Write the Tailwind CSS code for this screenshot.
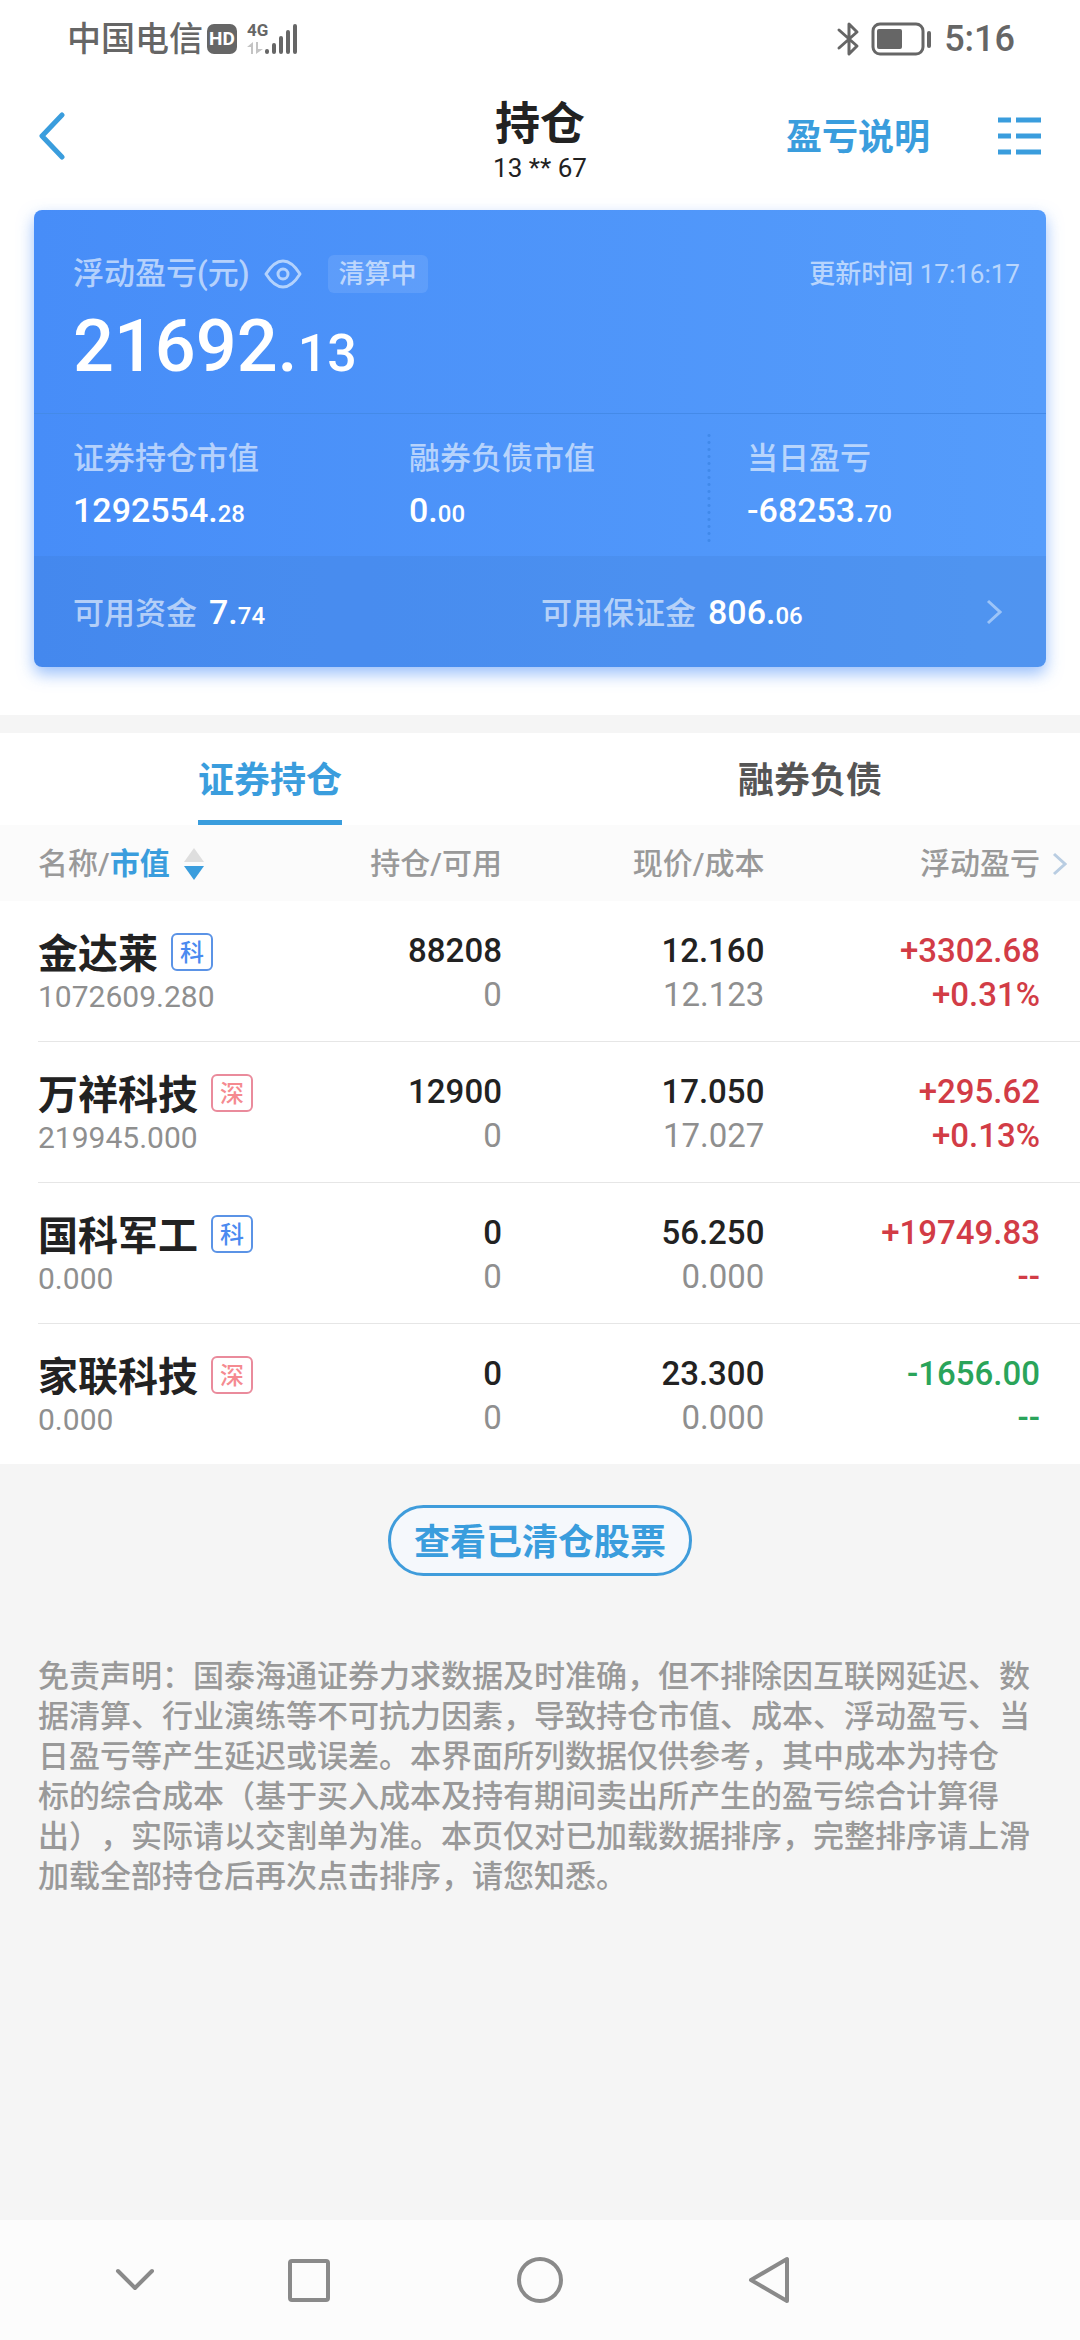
<!DOCTYPE html>
<html lang="zh-CN">

<head>
    <meta charset="UTF-8">
    <meta name="viewport" content="width=device-width, initial-scale=1.0">
    <title>持仓</title>
    <!-- Tailwind CSS CDN -->
    <script src="https://cdn.jsdelivr.net/npm/@tailwindcss/browser@4"></script>
</head>

<body class="min-h-screen flex flex-col bg-[#f5f5f5] text-[#222] font-['Roboto','Noto_Sans_CJK_SC',sans-serif]">

    <!-- Status bar -->
    <div class="bg-white flex items-center justify-between h-[76px] pt-[2px] pl-[67px] pr-[65px] text-[#666]">
        <div class="flex items-center">
            <span class="text-[34px] leading-[40px] font-medium">中国电信</span>
            <span class="ml-[4px] w-[30px] h-[30px] rounded-[7px] bg-[#666] text-white text-[19px] leading-[30px] font-bold text-center">HD</span>
            <svg class="ml-[10px] w-[54px] h-[44px]" viewBox="0 -5 54 44" fill="none">
                <text x="0" y="14" font-size="17" font-weight="700" fill="#666">4G</text>
                <path d="M6 20v12H4v-7H0zM9 20h2v7h5l-7 5z" fill="#c4c4c4" />
                <path d="M20 29v1M27 23v7M34 16v14M41 10v20M48 4v26" stroke="#666" stroke-width="4" stroke-linecap="round" />
            </svg>
        </div>
        <div class="flex items-center">
            <svg class="w-[24px] h-[36px]" viewBox="0 0 24 36" fill="none" stroke="#666" stroke-width="3" stroke-linejoin="round" stroke-linecap="round">
                <path d="M3 9l18 16-8 8V3l8 8L3 27" />
            </svg>
            <svg class="ml-[11px] w-[62px] h-[34px]" viewBox="0 0 62 34">
                <rect x="2" y="2" width="50" height="30" rx="7" fill="none" stroke="#666" stroke-width="3" />
                <rect x="6" y="7" width="25" height="20" rx="2" fill="#666" />
                <path d="M58 11v13" stroke="#666" stroke-width="4" stroke-linecap="round" />
            </svg>
            <span class="ml-[11px] text-[36px] leading-[40px] font-medium">5:16</span>
        </div>
    </div>

    <!-- Title bar -->
    <header class="bg-white grid grid-cols-3 items-center h-[120px] px-[38px]">
        <button type="button" aria-label="返回" class="justify-self-start">
            <svg class="w-[30px] h-[48px]" viewBox="0 0 30 48" fill="none" stroke="#3a9ddd" stroke-width="5" stroke-linecap="round" stroke-linejoin="round">
                <path d="M24 3L4 24l20 21" />
            </svg>
        </button>
        <div class="pt-[7px] text-center">
            <h1 class="text-[45px] leading-[56px] font-bold">持仓</h1>
            <p class="text-[26px] leading-[30px]">13 ** 67</p>
        </div>
        <div class="justify-self-end flex items-center gap-[68px]">
            <a href="#" class="pt-1 text-[36px] leading-[44px] font-bold text-[#3a9ddd] whitespace-nowrap">盈亏说明</a>
            <button type="button" aria-label="菜单">
                <svg class="w-[44px] h-[40px]" viewBox="0 0 44 40" fill="none" stroke="#3a9ddd" stroke-width="5">
                    <path d="M0 4h13M18 4h25M0 20h13M18 20h25M0 36h13M18 36h25" />
                </svg>
            </button>
        </div>
    </header>

    <!-- Summary card -->
    <section class="bg-white px-[34px] pt-[14px] pb-12">
        <div class="rounded-[8px] overflow-hidden bg-linear-to-r from-[#478df8] to-[#559cfb] text-white shadow-[0_7px_16px_rgba(71,141,248,0.55)]">
            <div class="h-[204px] pt-[41px] pl-[39px] pr-[26px] border-b border-[#448ae8]">
                <div class="flex items-center h-[46px]">
                    <span class="text-[31px] leading-[46px] font-medium text-white/60">浮动盈亏(元)</span>
                    <button type="button" aria-label="隐藏金额" class="ml-[14px]">
                        <svg class="w-[38px] h-[30px]" viewBox="0 0 38 30" fill="none" stroke="#b3d2fd" stroke-width="3">
                            <path d="M2 15C7 7 12 2 19 2s12 5 17 13c-5 8-10 13-17 13S7 23 2 15z" stroke-linejoin="round" />
                            <circle cx="19" cy="15" r="5" />
                        </svg>
                    </button>
                    <span class="ml-[26px] px-[11px] rounded-[6px] bg-white/10 text-[26px] leading-[38px] font-medium text-white/60">清算中</span>
                    <span class="ml-auto text-[26px] leading-[38px] font-medium text-white/60">更新时间 <span class="font-normal">17:16:17</span></span>
                </div>
                <p class="text-[72px] leading-[100px] font-medium">21692.<span class="text-[52px]">13</span></p>
            </div>

            <div class="h-[142px] grid grid-cols-[336fr_298fr_339fr] items-center pt-[4px] pl-[39px] font-medium">
                <dl class="pt-[4px]">
                    <dt class="text-[31px] leading-[46px] text-white/60">证券持仓市值</dt>
                    <dd class="text-[34px] leading-[56px]">1292554.<span class="text-[24px]">28</span></dd>
                </dl>
                <dl class="pt-[4px]">
                    <dt class="text-[31px] leading-[46px] text-white/60">融券负债市值</dt>
                    <dd class="text-[34px] leading-[56px]">0.<span class="text-[24px]">00</span></dd>
                </dl>
                <!-- dotted rule on the left side -->
                <dl class="pt-[4px] pl-[40px] bg-[radial-gradient(circle,#4089ea_1px,transparent_2px)] bg-[length:4px_7px] bg-repeat-y">
                    <dt class="text-[31px] leading-[46px] text-white/60">当日盈亏</dt>
                    <dd class="text-[34px] leading-[56px]">-68253.<span class="text-[24px]">70</span></dd>
                </dl>
            </div>

            <a href="#" class="h-[111px] flex items-center pl-[39px] pr-[44px] bg-[#3c78c8]/20 font-medium">
                <span class="flex-[468] pt-[4px] flex items-baseline gap-[12px]">
                    <span class="text-[31px] leading-[46px] text-white/60">可用资金</span>
                    <span class="text-[34px] leading-[46px]">7.<span class="text-[24px]">74</span></span>
                </span>
                <span class="flex-[445] pt-[4px] flex items-baseline gap-[12px]">
                    <span class="text-[31px] leading-[46px] text-white/60">可用保证金</span>
                    <span class="text-[34px] leading-[46px]">806.<span class="text-[24px]">06</span></span>
                </span>
                <svg class="w-[16px] h-[26px]" viewBox="0 0 16 26" fill="none" stroke="#9cc4f8" stroke-width="3">
                    <path d="M2 2l12 11L2 24" />
                </svg>
            </a>
        </div>
    </section>

    <!-- Tabs -->
    <div class="mt-[18px] bg-white grid grid-cols-2 justify-items-center h-[92px] text-[36px] font-bold" role="tablist">
        <button type="button" role="tab" aria-selected="true" class="h-[92px] pt-[9px] border-b-[5px] border-[#3a9ddd] text-[#3a9ddd] leading-[78px]">证券持仓</button>
        <button type="button" role="tab" aria-selected="false" class="h-[92px] pt-[9px] border-b-[5px] border-transparent text-[#555] leading-[78px]">融券负债</button>
    </div>

    <!-- Holdings -->
    <div class="bg-white pl-[38px] overflow-hidden">
        <table class="w-full table-fixed text-right text-[33px] leading-[44px] font-medium">
            <thead class="text-[30px] text-[#999]">
                <tr class="h-[76px] bg-[#fbfbfb] shadow-[-38px_0_0_#fbfbfb]">
                    <th class="w-[30%] pt-[2px] font-medium text-left">
                        <button type="button" class="flex items-center">
                            名称/<span class="font-bold text-[#3a9ddd]">市值</span>
                            <svg class="ml-[14px] w-[20px] h-[34px]" viewBox="0 0 20 34">
                                <path d="M10 1l10 14H0z" fill="#dedede" />
                                <path d="M10 33L0 19h20z" fill="#3a9ddd" />
                            </svg>
                        </button>
                    </th>
                    <th class="w-[15%] pt-[2px] pr-[5px] font-medium whitespace-nowrap">持仓/可用</th>
                    <th class="w-[25%] pt-[2px] pr-[3px] font-medium">现价/成本</th>
                    <th class="w-[30%] pt-[2px] pr-[13px] font-medium">
                        <div class="flex items-center justify-end gap-[12px]">
                            浮动盈亏
                            <svg class="w-[15px] h-[24px]" viewBox="0 0 15 24" fill="none" stroke="#b9cde2" stroke-width="3">
                                <path d="M2 2l11 10L2 22" />
                            </svg>
                        </div>
                    </th>
                </tr>
            </thead>
            <tbody>
                <tr class="border-b border-[#e6e6e6]">
                    <td class="pt-[28px] pb-[22px] text-left">
                        <div class="flex items-center h-[46px]">
                            <span class="pt-[5px] text-[40px] font-bold whitespace-nowrap">金达莱</span>
                            <span class="ml-[13px] w-[42px] h-[38px] border-2 border-[#5b93e6] rounded-[6px] text-center text-[24px] leading-[36px] text-[#4a8af0]">科</span>
                        </div>
                        <div class="text-[30px] font-normal text-[#8f8f8f]">1072609.280</div>
                    </td>
                    <td class="pt-[28px] pb-[24px] pr-[5px]">88208<div class="font-normal text-[#8f8f8f]">0</div></td>
                    <td class="pt-[28px] pb-[24px] pr-[3px]">12.160<div class="font-normal text-[#8f8f8f]">12.123</div></td>
                    <td class="pt-[28px] pb-[24px] pr-[40px] text-[#d23c46]">+3302.68<div>+0.31%</div></td>
                </tr>
                <tr class="border-b border-[#e6e6e6]">
                    <td class="pt-[28px] pb-[22px] text-left">
                        <div class="flex items-center h-[46px]">
                            <span class="pt-[5px] text-[40px] font-bold whitespace-nowrap">万祥科技</span>
                            <span class="ml-[13px] w-[42px] h-[38px] border-2 border-[#ea8b9c] rounded-[6px] text-center text-[24px] leading-[36px] text-[#f58a90]">深</span>
                        </div>
                        <div class="text-[30px] font-normal text-[#8f8f8f]">219945.000</div>
                    </td>
                    <td class="pt-[28px] pb-[24px] pr-[5px]">12900<div class="font-normal text-[#8f8f8f]">0</div></td>
                    <td class="pt-[28px] pb-[24px] pr-[3px]">17.050<div class="font-normal text-[#8f8f8f]">17.027</div></td>
                    <td class="pt-[28px] pb-[24px] pr-[40px] text-[#d23c46]">+295.62<div>+0.13%</div></td>
                </tr>
                <tr class="border-b border-[#e6e6e6]">
                    <td class="pt-[28px] pb-[22px] text-left">
                        <div class="flex items-center h-[46px]">
                            <span class="pt-[5px] text-[40px] font-bold whitespace-nowrap">国科军工</span>
                            <span class="ml-[13px] w-[42px] h-[38px] border-2 border-[#5b93e6] rounded-[6px] text-center text-[24px] leading-[36px] text-[#4a8af0]">科</span>
                        </div>
                        <div class="text-[30px] font-normal text-[#8f8f8f]">0.000</div>
                    </td>
                    <td class="pt-[28px] pb-[24px] pr-[5px]">0<div class="font-normal text-[#8f8f8f]">0</div></td>
                    <td class="pt-[28px] pb-[24px] pr-[3px]">56.250<div class="font-normal text-[#8f8f8f]">0.000</div></td>
                    <td class="pt-[28px] pb-[24px] pr-[40px] text-[#d23c46]">+19749.83<div>--</div></td>
                </tr>
                <tr>
                    <td class="pt-[28px] pb-[22px] text-left">
                        <div class="flex items-center h-[46px]">
                            <span class="pt-[5px] text-[40px] font-bold whitespace-nowrap">家联科技</span>
                            <span class="ml-[13px] w-[42px] h-[38px] border-2 border-[#ea8b9c] rounded-[6px] text-center text-[24px] leading-[36px] text-[#f58a90]">深</span>
                        </div>
                        <div class="text-[30px] font-normal text-[#8f8f8f]">0.000</div>
                    </td>
                    <td class="pt-[28px] pb-[24px] pr-[5px]">0<div class="font-normal text-[#8f8f8f]">0</div></td>
                    <td class="pt-[28px] pb-[24px] pr-[3px]">23.300<div class="font-normal text-[#8f8f8f]">0.000</div></td>
                    <td class="pt-[28px] pb-[24px] pr-[40px] text-[#2aa45a]">-1656.00<div>--</div></td>
                </tr>
            </tbody>
        </table>
    </div>

    <button type="button" class="mt-[41px] self-center h-[71px] pt-[5px] px-[23px] rounded-full border-[3px] border-[#3f9cdb] bg-[#f5f8fc] text-[36px] leading-[60px] font-bold text-[#3a9ddd]">查看已清仓股票</button>

    <p class="mt-[81px] px-[38px] text-[31px] leading-[40px] font-medium text-[#999] [text-spacing-trim:space-all]">
        免责声明：国泰海通证券力求数据及时准确，但不排除因互联网延迟、数<br>据清算、行业演练等不可抗力因素，导致持仓市值、成本、浮动盈亏、当<br>日盈亏等产生延迟或误差。本界面所列数据仅供参考，其中成本为持仓<br>标的综合成本（基于买入成本及持有期间卖出所产生的盈亏综合计算得<br>出），实际请以交割单为准。本页仅对已加载数据排序，完整排序请上滑<br>加载全部持仓后再次点击排序，请您知悉。
    </p>

    <!-- System navigation -->
    <nav class="mt-auto h-[120px] bg-[#fcfcfc] grid grid-cols-[48fr_174fr_174fr_288fr_170fr_226fr] items-center justify-items-center">
        <button type="button" aria-label="收起" class="col-start-2">
            <svg class="w-[48px] h-[48px]" viewBox="0 0 48 48" fill="none" stroke="#8a8a8a" stroke-width="4" stroke-linecap="round" stroke-linejoin="round">
                <path d="M7 15l17 17 17-17" />
            </svg>
        </button>
        <button type="button" aria-label="最近任务">
            <svg class="w-[48px] h-[48px]" viewBox="0 0 48 48" fill="none" stroke="#8a8a8a" stroke-width="4">
                <rect x="5" y="5" width="38" height="39" rx="2" />
            </svg>
        </button>
        <button type="button" aria-label="主屏幕">
            <svg class="w-[48px] h-[48px]" viewBox="0 0 48 48" fill="none" stroke="#8a8a8a" stroke-width="4">
                <circle cx="24" cy="24" r="21" />
            </svg>
        </button>
        <button type="button" aria-label="后退">
            <svg class="w-[48px] h-[48px]" viewBox="0 0 48 48" fill="none" stroke="#8a8a8a" stroke-width="4" stroke-linejoin="round">
                <path d="M42 3v42L6 24z" />
            </svg>
        </button>
    </nav>

</body>

</html>
